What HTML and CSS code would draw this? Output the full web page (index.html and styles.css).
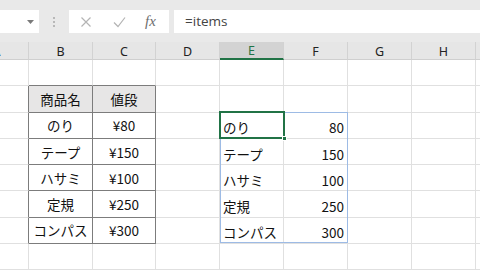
FILE: index.html
```html
<!DOCTYPE html>
<html lang="ja">

<head>
    <meta charset="UTF-8" />
    <meta name="viewport" content="width=device-width, initial-scale=1.0" />
    <title>items</title>
    <link rel="stylesheet" href="styles.css">
</head>

<body>
    <div class="toolbar">
        <div class="name-box">
            <svg class="arrow" width="7" height="4" viewBox="0 0 7 4"><path d="M0 0h7L3.5 4z" fill="#7a7a7a"/></svg>
        </div>
        <div class="dots"><span></span><span></span><span></span></div>
        <div class="fx-buttons">
            <svg width="12" height="12" viewBox="0 0 12 12"><path d="M1.5 1.5l9 9M10.5 1.5l-9 9" stroke="#b4b4b4" stroke-width="1.2" fill="none"/></svg>
            <svg width="13" height="12" viewBox="0 0 13 12"><path d="M1 6.5l4 4L12 1.5" stroke="#b4b4b4" stroke-width="1.2" fill="none"/></svg>
            <span class="fx">fx</span>
        </div>
        <div class="formula">=items</div>
    </div>

    <div class="viewport">
        <div class="sheet">
            <div class="c h">A</div><div class="c h">B</div><div class="c h">C</div><div class="c h">D</div><div class="c h active">E</div><div class="c h">F</div><div class="c h">G</div><div class="c h">H</div><div class="c h"></div>

            <div class="c"></div><div class="c tt"></div><div class="c tt"></div><div class="c"></div><div class="c"></div><div class="c"></div><div class="c"></div><div class="c"></div><div class="c"></div>

            <div class="c tl"></div><div class="c tb th">商品名</div><div class="c tb th">値段</div><div class="c"></div><div class="c"></div><div class="c"></div><div class="c"></div><div class="c"></div><div class="c"></div>

            <div class="c tl"></div><div class="c tb">のり</div><div class="c tb">¥80</div><div class="c"></div><div class="c txt">のり</div><div class="c num">80</div><div class="c"></div><div class="c"></div><div class="c"></div>

            <div class="c tl"></div><div class="c tb">テープ</div><div class="c tb">¥150</div><div class="c"></div><div class="c txt">テープ</div><div class="c num">150</div><div class="c"></div><div class="c"></div><div class="c"></div>

            <div class="c tl"></div><div class="c tb">ハサミ</div><div class="c tb">¥100</div><div class="c"></div><div class="c txt">ハサミ</div><div class="c num">100</div><div class="c"></div><div class="c"></div><div class="c"></div>

            <div class="c tl"></div><div class="c tb">定規</div><div class="c tb">¥250</div><div class="c"></div><div class="c txt">定規</div><div class="c num">250</div><div class="c"></div><div class="c"></div><div class="c"></div>

            <div class="c tl"></div><div class="c tb">コンパス</div><div class="c tb">¥300</div><div class="c"></div><div class="c txt">コンパス</div><div class="c num">300</div><div class="c"></div><div class="c"></div><div class="c"></div>

            <div class="c"></div><div class="c"></div><div class="c"></div><div class="c"></div><div class="c"></div><div class="c"></div><div class="c"></div><div class="c"></div><div class="c"></div>

            <div class="spill"></div>
            <div class="selected"><span class="handle"></span></div>
        </div>
    </div>
</body>

</html>
```

FILE: styles.css
```css
body {
    margin: 0;
    width: 480px;
    height: 270px;
    overflow: hidden;
    background: #fff;
    font-family: "Noto Sans CJK JP", "Noto Sans", sans-serif;
}

.toolbar {
    display: flex;
    align-items: center;
    height: 42px;
    padding-top: 1px;
    box-sizing: border-box;
    background: #e9e9e9;
}

.name-box {
    width: 39px;
    height: 23px;
    background: #fff;
    display: flex;
    align-items: center;
    justify-content: flex-end;
    padding-right: 5px;
    box-sizing: border-box;
}

.dots {
    width: 30px;
    display: flex;
    flex-direction: column;
    align-items: center;
    gap: 2px;
}

.dots span {
    width: 2px;
    height: 2px;
    background: #b8b8b8;
}

.fx-buttons {
    width: 100px;
    height: 23px;
    background: #fff;
    display: flex;
    align-items: center;
    padding-left: 11px;
    gap: 21px;
    box-sizing: border-box;
}

.fx {
    font-family: "Liberation Serif", serif;
    font-style: italic;
    font-size: 15px;
    color: #6e6e6e;
    margin-left: -2px;
}

.formula {
    flex-grow: 1;
    height: 23px;
    margin-left: 5px;
    background: #fff;
    padding-left: 11px;
    font-family: "Open Sans", sans-serif;
    font-size: 13.5px;
    line-height: 22px;
    color: #444;
}

.viewport {
    overflow: hidden;
}

/* column A is scrolled half out of view */
.sheet {
    position: relative;
    margin-left: -35px;
    display: grid;
    grid-template-columns: 64px 64px 63px 64px 64px 64px 64px 64px 64px;
    grid-template-rows: 18px repeat(8, 26.3px);
}

.c {
    border-right: 1px solid #e0e0e0;
    border-bottom: 1px solid #e0e0e0;
    font-size: 13.5px;
    color: #111;
    display: flex;
    align-items: center;
    overflow: hidden;
    white-space: nowrap;
}

.h {
    background: #e6e6e6;
    border-right-color: #d2d2d2;
    border-bottom-color: #cfcfcf;
    justify-content: center;
    font-family: "Noto Sans", sans-serif;
    font-size: 12.5px;
    color: #222;
    padding-top: 1px;
}

.h.active {
    background: #d3d3d3;
    color: #217346;
    border-bottom: 2px solid #217346;
}

.tt {
    border-bottom-color: #7c7c7c;
}

.tl {
    border-right-color: #7c7c7c;
}

.tb {
    border-right-color: #7c7c7c;
    border-bottom-color: #7c7c7c;
    justify-content: center;
}

.th {
    background: #e7e6e6;
}

.txt {
    padding-left: 3px;
    padding-top: 4px;
}

.num {
    justify-content: flex-end;
    padding-right: 3px;
    padding-top: 4px;
}

.spill {
    position: absolute;
    left: 255px;
    top: 70px;
    width: 126px;
    height: 129px;
    border: 1px solid #9dbbe5;
    pointer-events: none;
}

.selected {
    position: absolute;
    left: 254px;
    top: 69px;
    width: 62px;
    height: 24px;
    border: 2px solid #217346;
}

.handle {
    position: absolute;
    right: -4px;
    bottom: -4px;
    width: 5px;
    height: 5px;
    background: #217346;
    border: 1px solid #fff;
    box-sizing: border-box;
}
```
